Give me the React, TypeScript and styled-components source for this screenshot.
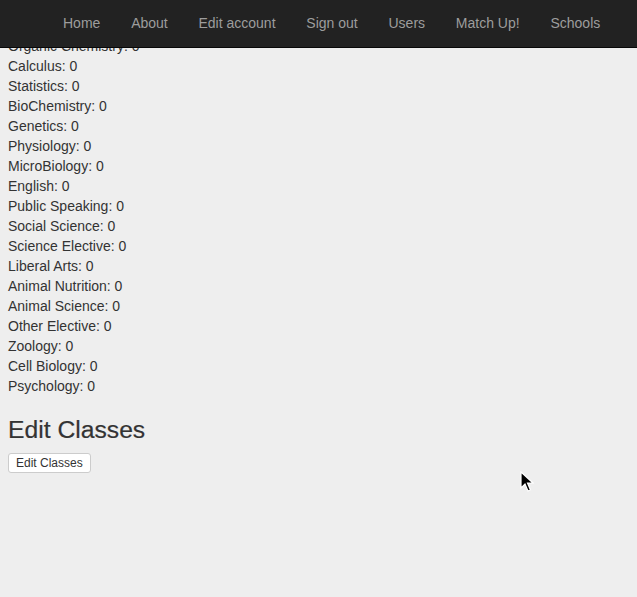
import * as React from 'react';
import styled, { createGlobalStyle } from 'styled-components';

const GlobalStyle = createGlobalStyle`
  html, body {
    margin: 0;
    padding: 0;
    background: #eeeeee;
  }
  body {
    font-family: "Liberation Sans", Arial, sans-serif;
    font-size: 14px;
    line-height: 20px;
    color: #333333;
    height: 597px;
    overflow: hidden;
  }
`;

const NavBar = styled.nav`
  position: fixed;
  top: 0;
  left: 0;
  right: 0;
  height: 48px;
  background: #222222;
  border-bottom: 1px solid #080808;
  box-sizing: border-box;
  z-index: 10;
`;

const NavList = styled.ul`
  display: flex;
  list-style: none;
  margin: 0;
  padding: 0 0 0 47.6px;
`;

const NavLink = styled.a`
  display: block;
  padding: 13px 15.4px 14px;
  color: #9d9d9d;
  text-decoration: none;
  font-size: 14px;
  line-height: 20px;
`;

const Content = styled.main`
  padding: 36px 8px 0;
`;

const ClassList = styled.ul`
  list-style: none;
  margin: 0;
  padding: 0;
`;

const ClassRow = styled.li`
  line-height: 20px;
`;

const Heading = styled.h3`
  font-size: 24.7px;
  font-weight: 500;
  line-height: 26px;
  margin: 21px 0 9px;
  -webkit-text-stroke: 0.2px #333333;
`;

const SmallButton = styled.button`
  font-family: "Liberation Sans", Arial, sans-serif;
  font-size: 12px;
  line-height: 18px;
  padding: 0 7px;
  color: #333333;
  background: #ffffff;
  border: 1px solid #cccccc;
  border-radius: 3px;
`;

const Cursor = styled.svg`
  position: fixed;
  left: 520px;
  top: 471px;
`;

const links = [`Home`, `About`, `Edit account`, `Sign out`, `Users`, `Match Up!`, `Schools`];

const classes = [
  `Organic Chemistry`,
  `Calculus`,
  `Statistics`,
  `BioChemistry`,
  `Genetics`,
  `Physiology`,
  `MicroBiology`,
  `English`,
  `Public Speaking`,
  `Social Science`,
  `Science Elective`,
  `Liberal Arts`,
  `Animal Nutrition`,
  `Animal Science`,
  `Other Elective`,
  `Zoology`,
  `Cell Biology`,
  `Psychology`,
];

export default function App() {
  return (
    <>
      <GlobalStyle />
      <NavBar>
        <NavList>
          {links.map((l) => (
            <li key={l}>
              <NavLink href="#">{l}</NavLink>
            </li>
          ))}
        </NavList>
      </NavBar>
      <Content>
        <ClassList>
          {classes.map((c) => (
            <ClassRow key={c}>{c}: 0</ClassRow>
          ))}
        </ClassList>
        <Heading>Edit Classes</Heading>
        <SmallButton>Edit Classes</SmallButton>
      </Content>
      <Cursor width="14" height="22" viewBox="0 0 14 22">
        <path d="M1 1 L1 17 L5 13 L8 20 L10.5 19 L7.5 12 L13 12 Z" fill="#000" stroke="#fff" strokeWidth="1.2" />
      </Cursor>
    </>
  );
}
